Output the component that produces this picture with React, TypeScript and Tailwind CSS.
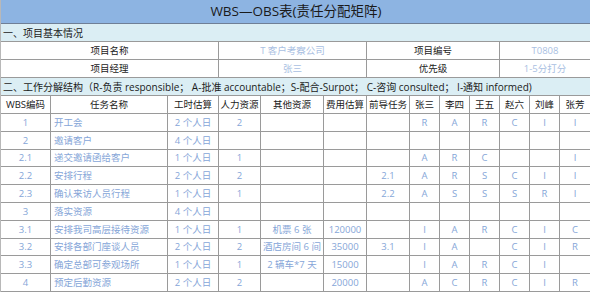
import React from 'react';

type Row = {
  code: string;
  name: string;
  hours: string;
  people: string;
  other: string;
  cost: string;
  prev: string;
  roles: string[];
};

const rows: Row[] = [
  { code: '1', name: '开工会', hours: '2 个人日', people: '2', other: '', cost: '', prev: '', roles: ['R', 'A', 'R', 'C', 'I', 'I'] },
  { code: '2', name: '邀请客户', hours: '4 个人日', people: '', other: '', cost: '', prev: '', roles: ['', '', '', '', '', ''] },
  { code: '2.1', name: '递交邀请函给客户', hours: '1 个人日', people: '1', other: '', cost: '', prev: '', roles: ['A', 'R', 'C', '', '', 'I'] },
  { code: '2.2', name: '安排行程', hours: '2 个人日', people: '2', other: '', cost: '', prev: '2.1', roles: ['A', 'R', 'S', 'C', 'I', 'I'] },
  { code: '2.3', name: '确认来访人员行程', hours: '1 个人日', people: '1', other: '', cost: '', prev: '2.2', roles: ['A', 'S', 'S', 'S', 'R', 'I'] },
  { code: '3', name: '落实资源', hours: '4 个人日', people: '', other: '', cost: '', prev: '', roles: ['', '', '', '', '', ''] },
  { code: '3.1', name: '安排我司高层接待资源', hours: '1 个人日', people: '1', other: '机票 6 张', cost: '120000', prev: '', roles: ['I', 'A', 'R', 'C', 'I', 'C'] },
  { code: '3.2', name: '安排各部门座谈人员', hours: '2 个人日', people: '2', other: '酒店房间 6 间', cost: '35000', prev: '3.1', roles: ['I', 'A', '', 'C', 'I', 'R'] },
  { code: '3.3', name: '确定总部可参观场所', hours: '1 个人日', people: '1', other: '2 辆车*7 天', cost: '15000', prev: '', roles: ['I', 'A', 'R', 'C', 'I', ''] },
  { code: '4', name: '预定后勤资源', hours: '2 个人日', people: '2', other: '', cost: '20000', prev: '', roles: ['A', 'C', 'R', 'C', 'I', 'R'] },
];

const headers = ['WBS编码', '任务名称', '工时估算', '人力资源', '其他资源', '费用估算', '前导任务', '张三', '李四', '王五', '赵六', '刘峰', '张芳'];

const cell = 'flex items-center justify-center border-r border-b border-[#9a9a9a] whitespace-nowrap overflow-hidden';
const data = 'text-[#86a6d8]';

export default function App() {
  return (
    <div className="w-[590px] h-[292px] bg-white overflow-hidden font-['Open_Sans','Noto_Sans_CJK_SC',sans-serif] text-[9.5px] leading-none text-[#1a1a1a]">
      <div className="grid grid-cols-[50px_117px_51px_42px_63px_43px_43px_30px_30px_30px_30px_30px_31px] grid-rows-[24px_18px_18px_18px_18px_18px_18px_18px_17px_18px_18px_18px_18px_17px_18px_18px] border-l border-[#b8b8b8]">
        <div className="col-span-13 flex items-center justify-center bg-[#8db4e2] border-b border-[#6f7f96] text-[13.5px]">
          WBS—OBS表(责任分配矩阵)
        </div>

        <div className="col-span-13 flex items-center pl-[2px] bg-[#dbeef4] border-b border-[#9a9a9a] text-[10px]">
          一、项目基本情况
        </div>

        <div className={`col-span-3 ${cell}`}>项目名称</div>
        <div className={`col-span-3 ${cell} text-[#a9c0e2]`}>T 客户考察公司</div>
        <div className={`col-span-4 ${cell}`}>项目编号</div>
        <div className={`col-span-3 ${cell} text-[#a9c0e2]`}>T0808</div>

        <div className={`col-span-3 ${cell}`}>项目经理</div>
        <div className={`col-span-3 ${cell} text-[#a9c0e2]`}>张三</div>
        <div className={`col-span-4 ${cell}`}>优先级</div>
        <div className={`col-span-3 ${cell} text-[#a9c0e2]`}>1-5分打分</div>

        <div className="col-span-13 flex items-center pl-[2px] bg-[#dbeef4] border-b border-[#9a9a9a] whitespace-nowrap text-[10px]">
          二、工作分解结构（R-负责 responsible； A-批准 accountable；S-配合-Surpot； C-咨询 consulted； I-通知 informed)
        </div>

        {headers.map((h) => (
          <div key={h} className={cell}>
            {h}
          </div>
        ))}

        {rows.map((r) => (
          <React.Fragment key={r.code}>
            <div className={`${cell} ${data}`}>{r.code}</div>
            <div className={`${cell} ${data} justify-start pl-[3px]`}>{r.name}</div>
            <div className={`${cell} ${data}`}>{r.hours}</div>
            <div className={`${cell} ${data}`}>{r.people}</div>
            <div className={`${cell} ${data}`}>{r.other}</div>
            <div className={`${cell} ${data}`}>{r.cost}</div>
            <div className={`${cell} ${data}`}>{r.prev}</div>
            {r.roles.map((role, i) => (
              <div key={i} className={`${cell} ${data}`}>
                {role}
              </div>
            ))}
          </React.Fragment>
        ))}
      </div>
    </div>
  );
}
